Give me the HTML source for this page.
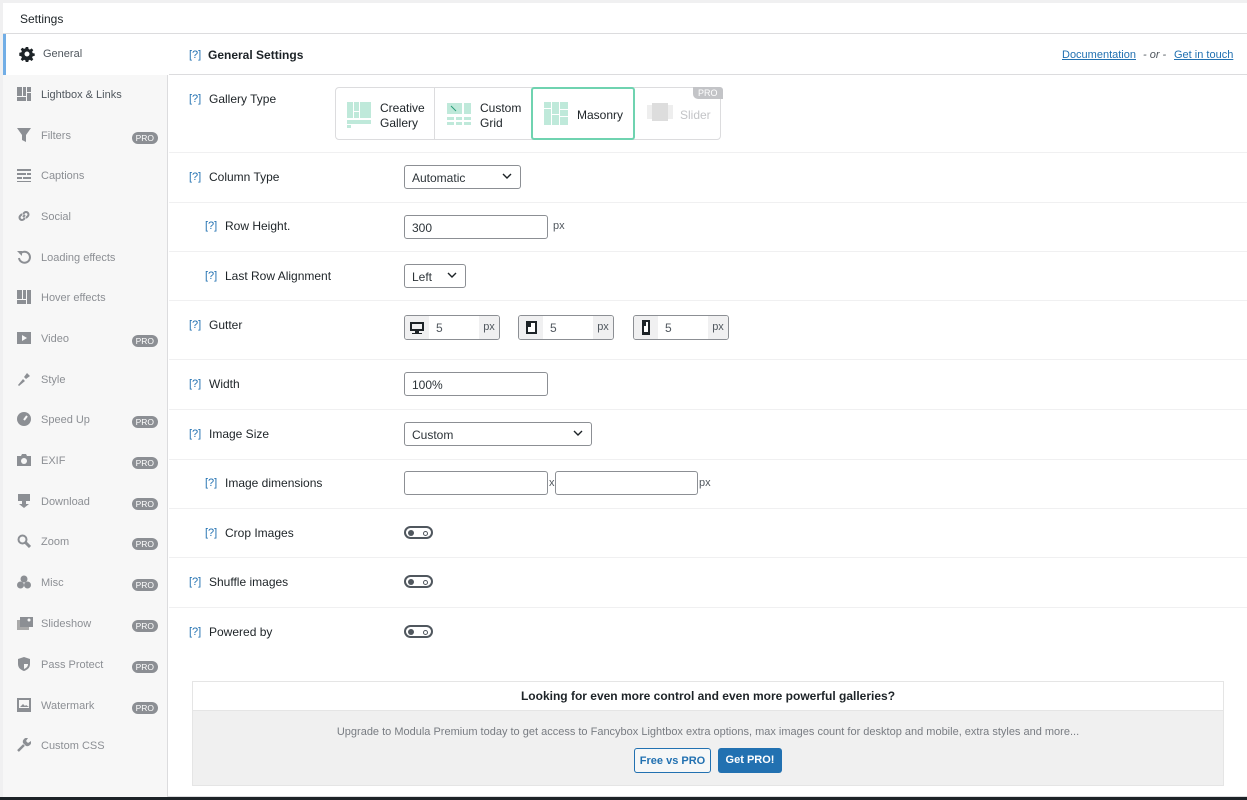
<!DOCTYPE html><html><head><meta charset="utf-8"><style>
*{box-sizing:border-box;margin:0;padding:0}
body{width:1247px;height:800px;overflow:hidden;background:#f0f0f1;font-family:"Liberation Sans",sans-serif;font-size:12px;color:#1d2327;position:relative}
.a{position:absolute}
#wrap{position:absolute;left:3px;top:3px;width:1250px;height:794px;background:#fff;border:1px solid #dcdcde}
#side{left:3px;top:34px;width:165px;height:763px;background:#f7f7f7;border-right:1px solid #dcdcde}
.it{position:absolute;left:3px;width:165px;height:41px;color:#8c8f94;font-size:11px}
.it svg{position:absolute;left:14px;top:12px}
.it span.t{position:absolute;left:38px;top:14px}
.pro{position:absolute;right:10px;top:16px;background:#8c8f94;color:#fff;font-size:8.5px;border-radius:6px;padding:1px 4px;line-height:10px}
.row{position:absolute;left:169px;width:1078px;border-bottom:1px solid #f0f0f1}
.q{color:#2271b1;position:absolute;font-size:11px}
.lab{position:absolute;font-size:12px;color:#1d2327}
.sel,.inp{position:absolute;border:1px solid #8c8f94;border-radius:3px;height:24px;background:#fff;font-size:12px;padding:5px 7px;color:#2c3338}
.chev{position:absolute;right:8px;top:6px}
.tog{position:absolute;width:29px;height:13px;border:2px solid #50575e;border-radius:8px}
.tog:before{content:"";position:absolute;left:2px;top:2px;width:6px;height:6px;border-radius:50%;background:#50575e}
.tog:after{content:"";position:absolute;right:3px;top:2.5px;width:3px;height:3px;border-radius:50%;border:1px solid #50575e}
.gut{position:absolute;top:315px;width:96px;height:25px;border:1px solid #8c8f94;border-radius:3px;background:#fff;overflow:hidden}
.gut .ic{position:absolute;left:0;top:0;width:24px;height:23px;background:#f0f0f1}
.gut .px{position:absolute;right:0;top:0;width:20px;height:23px;background:#f0f0f1;font-size:11px;color:#50575e;padding-top:5px;text-align:center}
.gut .v{position:absolute;left:31px;top:5px;font-size:12px;color:#50575e}
</style></head><body>
<div id="wrap"></div>
<div class="a" style="left:3px;top:3px;width:1244px;height:31px;border-bottom:1px solid #dcdcde;background:#fff"></div>
<div class="a" style="left:20px;top:12px;font-size:12px;color:#1d2327">Settings</div>
<div class="a" id="side"></div>
<div class="it" style="left:3px;top:34px;background:#fff;border-left:3px solid #72aee6;color:#50575e;width:166px">
<svg width="16" height="16" viewBox="0 0 16 16" style="left:13px"><path fill="#1d2327" d="M6.8 1h2.4l.4 2 1.3.6 1.7-1.2 1.7 1.7-1.2 1.7.6 1.3 2 .4v2.4l-2 .4-.6 1.3 1.2 1.7-1.7 1.7-1.7-1.2-1.3.6-.4 2H6.8l-.4-2-1.3-.6-1.700 1.2-1.7-1.7 1.2-1.7-.6-1.3-2-.4V6.8l2-.4.6-1.3-1.2-1.7 1.7-1.7 1.7 1.2 1.3-.6zM8 5.5a2.5 2.5 0 100 5 2.5 2.5 0 000-5z"/></svg><span class="t" style="left:37px">General</span></div>
<div class="it" style="top:75px"><svg width="14" height="14"><path fill="#8c8f94" d="M0 0h14v14H0z"/><path fill="#f7f7f7" d="M5 0h1v9H5zM9 0h1v14H9zM0 9h9v1H0zM10 5h4v1h-4z"/></svg><span class="t" style="color:#50575e">Lightbox &amp; Links</span></div>
<div class="it" style="top:116px"><svg width="14" height="14"><path fill="#8c8f94" d="M0 0h14L9 7v7L5 12V7z"/></svg><span class="t">Filters</span><span class="pro">PRO</span></div>
<div class="it" style="top:156px"><svg width="14" height="14"><path fill="#8c8f94" d="M0 1h14v2H0zM0 5h9v2H0zM10 5h4v2h-4zM0 9h5v2H0zM6 9h8v2H6zM0 13h14v1H0z"/></svg><span class="t">Captions</span></div>
<div class="it" style="top:197px"><svg width="14" height="14"><path fill="none" stroke="#8c8f94" stroke-width="2" d="M6 8l2-2M5 5L3 7a2.5 2.5 0 003.5 3.5L8 9M9 9l2-2a2.5 2.5 0 00-3.5-3.5L6 5"/></svg><span class="t">Social</span></div>
<div class="it" style="top:238px"><svg width="14" height="14"><path fill="none" stroke="#8c8f94" stroke-width="2" d="M3 4a5.5 5.5 0 11-1 4"/><path fill="#8c8f94" d="M0 1h5v5z"/></svg><span class="t">Loading effects</span></div>
<div class="it" style="top:278px"><svg width="14" height="14"><path fill="#8c8f94" d="M0 0h14v14H0z"/><path fill="#f7f7f7" d="M5 0h1v9H5zM9 0h1v14H9zM0 9h9v1H0z"/></svg><span class="t">Hover effects</span></div>
<div class="it" style="top:319px"><svg width="14" height="14"><path fill="#8c8f94" d="M0 1h14v12H0z"/><path fill="#f7f7f7" d="M5 4l5 3-5 3z"/></svg><span class="t">Video</span><span class="pro">PRO</span></div>
<div class="it" style="top:360px"><svg width="14" height="14"><path fill="#8c8f94" d="M1 13l5-6 2 2-6 5zM7 5l3-4 3 3-4 3z"/></svg><span class="t">Style</span></div>
<div class="it" style="top:400px"><svg width="14" height="14"><circle cx="7" cy="7" r="7" fill="#8c8f94"/><path stroke="#f7f7f7" stroke-width="2" d="M7 8l3-4"/></svg><span class="t">Speed Up</span><span class="pro">PRO</span></div>
<div class="it" style="top:441px"><svg width="14" height="14"><path fill="#8c8f94" d="M0 3h4l1-2h4l1 2h4v10H0z"/><circle cx="7" cy="8" r="3" fill="#f7f7f7"/></svg><span class="t">EXIF</span><span class="pro">PRO</span></div>
<div class="it" style="top:482px"><svg width="14" height="14"><path fill="#8c8f94" d="M1 0h12v7H9v3h3l-5 4-5-4h3V7H1z"/></svg><span class="t">Download</span><span class="pro">PRO</span></div>
<div class="it" style="top:522px"><svg width="14" height="14"><circle cx="5.5" cy="5.5" r="4" fill="none" stroke="#8c8f94" stroke-width="2"/><path stroke="#8c8f94" stroke-width="3" d="M8 8l5 5"/></svg><span class="t">Zoom</span><span class="pro">PRO</span></div>
<div class="it" style="top:563px"><svg width="14" height="14"><circle cx="7" cy="4" r="3.5" fill="#8c8f94"/><circle cx="3.5" cy="10" r="3.5" fill="#8c8f94"/><circle cx="10.5" cy="10" r="3.5" fill="#8c8f94"/></svg><span class="t">Misc</span><span class="pro">PRO</span></div>
<div class="it" style="top:604px"><svg width="16" height="14"><path fill="#aaa" d="M0 4h12v10H0z"/><path fill="#8c8f94" d="M3 1h13v10H3z"/><circle cx="12" cy="4" r="1.5" fill="#f7f7f7"/></svg><span class="t">Slideshow</span><span class="pro">PRO</span></div>
<div class="it" style="top:645px"><svg width="14" height="14"><path fill="#8c8f94" d="M7 0l6 2v5c0 4-3 6-6 7-3-1-6-3-6-7V2z"/><path fill="#f7f7f7" d="M7 2v5h4c0 3-2 4-4 5z"/></svg><span class="t">Pass Protect</span><span class="pro">PRO</span></div>
<div class="it" style="top:686px"><svg width="14" height="14"><path fill="#8c8f94" d="M0 0h14v14H0z"/><path fill="#f7f7f7" d="M2 2h10v8H2z"/><path fill="#8c8f94" d="M3 9l3-3 2 2 1-1 3 2z"/></svg><span class="t">Watermark</span><span class="pro">PRO</span></div>
<div class="it" style="top:726px"><svg width="14" height="14"><path fill="none" stroke="#8c8f94" stroke-width="2.5" d="M1 13l6-6"/><path fill="#8c8f94" d="M6 5a4 4 0 015-5L9 3l2 2 3-2a4 4 0 01-5 5z"/></svg><span class="t">Custom CSS</span></div>

<div class="row" style="top:34px;height:41px;border-bottom:1px solid #dcdcde"></div>
<span class="q" style="left:189px;top:49px">[?]</span><span class="lab" style="left:208px;top:48px;font-weight:bold">General Settings</span>
<a class="a" style="left:1062px;top:49px;font-size:11px;color:#2271b1;text-decoration:underline">Documentation</a>
<span class="a" style="left:1143px;top:49px;font-size:11px;color:#50575e;font-style:italic">- or -</span>
<a class="a" style="left:1174px;top:49px;font-size:11px;color:#2271b1;text-decoration:underline">Get in touch</a>

<div class="row" style="top:75px;height:78px"></div>
<span class="q" style="left:189px;top:93px">[?]</span><span class="lab" style="left:209px;top:92px">Gallery Type</span>
<div class="a" style="left:335px;top:87px;width:386px;height:53px;border:1px solid #dcdcde;border-radius:4px;background:#fff"></div>
<div class="a" style="left:434px;top:88px;width:1px;height:51px;background:#dcdcde"></div>
<div class="a" style="left:531px;top:87px;width:104px;height:53px;border:2px solid #6fd3b0;border-radius:3px;background:#fff"></div>
<svg class="a" style="left:347px;top:102px" width="26" height="26"><path fill="#bfe9da" d="M0 0h6v16H0zM7 0h5v9H7zM13 0h11v16H13zM7 10h5v6H7zM0 18h24v4H0zM0 23h4v3H0z"/></svg>
<span class="a" style="left:380px;top:101px;font-size:12px;line-height:15px">Creative<br>Gallery</span>
<svg class="a" style="left:447px;top:103px" width="26" height="24"><path fill="#bfe9da" d="M0 0h15v11H0zM17 0h7v11h-7zM0 14h7v3H0zM9 14h6v3H9zM17 14h7v3h-7zM0 19h7v3H0zM9 19h6v3H9zM17 19h7v3h-7z"/><path stroke="#2a9d78" d="M4 3l5 5"/></svg>
<span class="a" style="left:480px;top:101px;font-size:12px;line-height:15px">Custom<br>Grid</span>
<svg class="a" style="left:544px;top:102px" width="26" height="26"><path fill="#bfe9da" d="M0 0h7v6H0zM0 7h7v16H0zM8 0h7v12H8zM8 13h7v10H8zM16 0h8v7h-8zM16 8h8v6h-8zM16 15h8v8h-8z"/></svg>
<span class="a" style="left:577px;top:108px;font-size:12px">Masonry</span>
<svg class="a" style="left:647px;top:103px" width="26" height="24"><path fill="#eee" d="M0 2h5v14H0zM21 2h5v14h-5z"/><path fill="#ddd" d="M5 0h16v18H5z"/></svg>
<span class="a" style="left:680px;top:108px;font-size:12px;color:#c3c4c7">Slider</span>
<span class="a" style="left:693px;top:87px;background:#c3c4c7;color:#fff;font-size:9px;padding:1px 5px;border-radius:0 3px 0 5px">PRO</span>

<div class="row" style="top:153px;height:50px"></div>
<span class="q" style="left:189px;top:171px">[?]</span><span class="lab" style="left:209px;top:170px">Column Type</span>
<div class="sel" style="left:404px;top:165px;width:117px">Automatic<svg class="chev" width="10" height="8"><path d="M1 2l4 4 4-4" fill="none" stroke="#1d2327" stroke-width="1.4"/></svg></div>

<div class="row" style="top:203px;height:49px"></div>
<span class="q" style="left:205px;top:220px">[?]</span><span class="lab" style="left:225px;top:219px">Row Height.</span>
<div class="inp" style="left:404px;top:215px;width:144px">300</div><span class="a" style="left:553px;top:220px;font-size:11px;color:#50575e">px</span>

<div class="row" style="top:252px;height:49px"></div>
<span class="q" style="left:205px;top:270px">[?]</span><span class="lab" style="left:225px;top:269px">Last Row Alignment</span>
<div class="sel" style="left:404px;top:264px;width:62px">Left<svg class="chev" width="10" height="8"><path d="M1 2l4 4 4-4" fill="none" stroke="#1d2327" stroke-width="1.4"/></svg></div>

<div class="row" style="top:301px;height:59px"></div>
<span class="q" style="left:189px;top:319px">[?]</span><span class="lab" style="left:209px;top:318px">Gutter</span>
<div class="gut" style="left:404px"><div class="ic"><svg width="24" height="23"><path fill="#1d2327" d="M5 6h14v9H5zM10 15h4v2h3v1H7v-1h3z"/><path fill="#f0f0f1" d="M7 8h10v5H7z"/></svg></div><span class="v">5</span><div class="px">px</div></div>
<div class="gut" style="left:518px"><div class="ic"><svg width="24" height="23"><path fill="#1d2327" d="M7 5h11v13H7z"/><path fill="#fff" d="M9 7h7v9H9z"/><path fill="#1d2327" d="M9 7h3v4H9z"/></svg></div><span class="v">5</span><div class="px">px</div></div>
<div class="gut" style="left:633px"><div class="ic"><svg width="24" height="23"><path fill="#1d2327" d="M8 4h8v15H8z"/><path fill="#fff" d="M10 6h4v10h-4z"/><path fill="#1d2327" d="M10 6h2v4h-2z"/></svg></div><span class="v">5</span><div class="px">px</div></div>

<div class="row" style="top:360px;height:50px"></div>
<span class="q" style="left:189px;top:378px">[?]</span><span class="lab" style="left:209px;top:377px">Width</span>
<div class="inp" style="left:404px;top:372px;width:144px">100%</div>

<div class="row" style="top:410px;height:50px"></div>
<span class="q" style="left:189px;top:428px">[?]</span><span class="lab" style="left:209px;top:427px">Image Size</span>
<div class="sel" style="left:404px;top:422px;width:188px">Custom<svg class="chev" width="10" height="8"><path d="M1 2l4 4 4-4" fill="none" stroke="#1d2327" stroke-width="1.4"/></svg></div>

<div class="row" style="top:460px;height:49px"></div>
<span class="q" style="left:205px;top:477px">[?]</span><span class="lab" style="left:225px;top:476px">Image dimensions</span>
<div class="inp" style="left:404px;top:471px;width:144px"></div><span class="a" style="left:549px;top:477px;font-size:11px;color:#50575e">x</span>
<div class="inp" style="left:555px;top:471px;width:143px"></div><span class="a" style="left:699px;top:477px;font-size:11px;color:#50575e">px</span>

<div class="row" style="top:509px;height:49px"></div>
<span class="q" style="left:205px;top:527px">[?]</span><span class="lab" style="left:225px;top:526px">Crop Images</span>
<div class="tog" style="left:404px;top:526px"></div>

<div class="row" style="top:558px;height:50px"></div>
<span class="q" style="left:189px;top:576px">[?]</span><span class="lab" style="left:209px;top:575px">Shuffle images</span>
<div class="tog" style="left:404px;top:575px"></div>

<span class="q" style="left:189px;top:626px">[?]</span><span class="lab" style="left:209px;top:625px">Powered by</span>
<div class="tog" style="left:404px;top:625px"></div>

<div class="a" style="left:192px;top:681px;width:1032px;height:105px;border:1px solid #e5e5e5;background:#f0f0f0"></div>
<div class="a" style="left:193px;top:682px;width:1030px;height:29px;background:#fff;border-bottom:1px solid #e5e5e5;text-align:center;font-weight:bold;font-size:12px;padding-top:7px">Looking for even more control and even more powerful galleries?</div>
<div class="a" style="left:193px;top:726px;width:1030px;text-align:center;font-size:11px;color:#787c82">Upgrade to Modula Premium today to get access to Fancybox Lightbox extra options, max images count for desktop and mobile, extra styles and more...</div>
<div class="a" style="left:634px;top:748px;width:77px;height:25px;border:1px solid #2271b1;border-radius:3px;background:#f6f7f7;color:#2271b1;font-weight:bold;font-size:11px;text-align:center;padding-top:6px">Free vs PRO</div>
<div class="a" style="left:718px;top:748px;width:64px;height:25px;border-radius:3px;background:#2271b1;color:#fff;font-weight:bold;font-size:11px;text-align:center;padding-top:6px">Get PRO!</div>
<div class="a" style="left:0;top:797px;width:1247px;height:3px;background:#1d2327"></div>
</body></html>
